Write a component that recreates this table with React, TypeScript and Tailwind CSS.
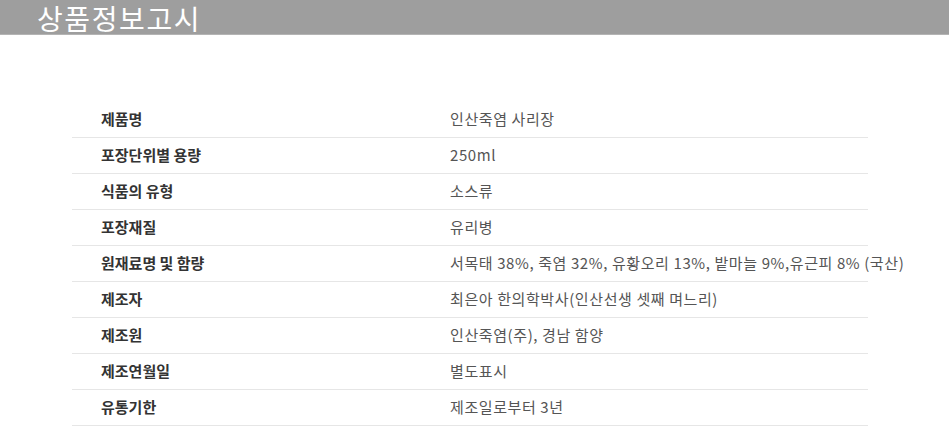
const rows = [
  { label: "제품명", value: "인산죽염 사리장" },
  { label: "포장단위별 용량", value: "250ml" },
  { label: "식품의 유형", value: "소스류" },
  { label: "포장재질", value: "유리병" },
  {
    label: "원재료명 및 함량",
    value: "서목태 38%, 죽염 32%, 유황오리 13%, 밭마늘 9%,유근피 8% (국산)",
  },
  { label: "제조자", value: "최은아 한의학박사(인산선생 셋째 며느리)" },
  { label: "제조원", value: "인산죽염(주), 경남 함양" },
  { label: "제조연월일", value: "별도표시" },
  { label: "유통기한", value: "제조일로부터 3년" },
];

export default function App() {
  return (
    <div className="w-[949px] h-[428px] bg-white font-['Noto_Sans_CJK_KR',sans-serif] overflow-hidden">
      <div className="h-[35px] bg-[#9e9e9e] border-b border-[#b4b4b4] flex items-center pl-[37px]">
        <h2 className="text-white text-[28px] leading-[30px] tracking-[1.6px] pt-[2px]">
          상품정보고시
        </h2>
      </div>

      <div className="mt-[67px] ml-[72px] w-[796px]">
        {rows.map((row) => (
          <div
            key={row.label}
            className="h-[36px] flex items-center border-b border-[#e6e6e6]"
          >
            <div className="w-[378px] shrink-0 pl-[29px] text-[15px] font-bold text-[#333333]">
              {row.label}
            </div>
            <div className="text-[15px] tracking-[0.6px] text-[#555555] whitespace-nowrap">
              {row.value}
            </div>
          </div>
        ))}
      </div>
    </div>
  );
}
